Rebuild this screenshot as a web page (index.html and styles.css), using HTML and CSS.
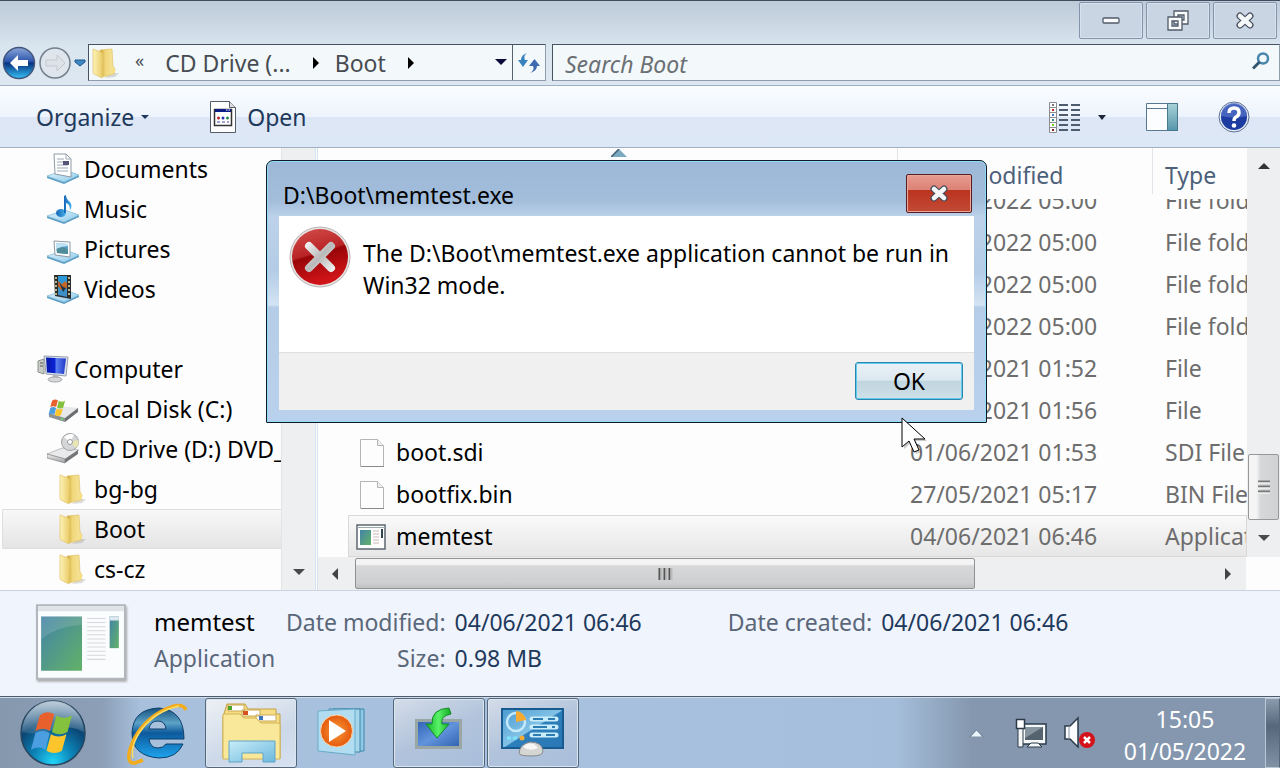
FILE: index.html
```html
<!DOCTYPE html>
<html lang="en">
<head>
<meta charset="utf-8">
<title>Boot</title>
<link rel="stylesheet" href="styles.css">
</head>
<body>
<svg class="defs" width="0" height="0" aria-hidden="true">
  <defs>
    <linearGradient id="gFold" x1="0" x2="1"><stop offset="0" stop-color="#fdf3b8"/><stop offset="1" stop-color="#e9c963"/></linearGradient>
    <linearGradient id="gFoldB" x1="0" x2="1"><stop offset="0" stop-color="#c99f2e"/><stop offset=".35" stop-color="#f0d678"/><stop offset="1" stop-color="#f7e6a0"/></linearGradient>
    <linearGradient id="gBase" x1="0" x2="1" y1="0" y2="1"><stop offset="0" stop-color="#e6f5fc"/><stop offset="1" stop-color="#8cc8ea"/></linearGradient>
    <linearGradient id="gNote" x1="0" x2="1"><stop offset="0" stop-color="#1466b8"/><stop offset="1" stop-color="#4ab2e8"/></linearGradient>
    <linearGradient id="gScreen" x1="0" x2="1"><stop offset="0" stop-color="#0718a8"/><stop offset=".45" stop-color="#0a22d8"/><stop offset=".5" stop-color="#5b82f0"/><stop offset="1" stop-color="#2038c8"/></linearGradient>
    <linearGradient id="gDisk" x1="0" x2="0" y1="0" y2="1"><stop offset="0" stop-color="#f4f4f4"/><stop offset="1" stop-color="#9a9c9e"/></linearGradient>
    <linearGradient id="gApp" x1="0" x2="1" y1="0" y2="1"><stop offset="0" stop-color="#4383a8"/><stop offset="1" stop-color="#62b267"/></linearGradient>
    <linearGradient id="gBack" x1="0" x2="0" y1="0" y2="1"><stop offset="0" stop-color="#8aa6d8"/><stop offset=".45" stop-color="#2c55ac"/><stop offset=".5" stop-color="#08307e"/><stop offset="1" stop-color="#35c3f6"/></linearGradient>
    <linearGradient id="gRed" x1="0" x2=".3" y1="0" y2="1"><stop offset="0" stop-color="#d4504c"/><stop offset=".5" stop-color="#b92426"/><stop offset=".54" stop-color="#980508"/><stop offset="1" stop-color="#cf1418"/></linearGradient>
    <linearGradient id="gX" gradientUnits="userSpaceOnUse" x1="17" x2="45" y1="17" y2="45"><stop offset="0" stop-color="#f4f4f4"/><stop offset=".5" stop-color="#b9b9b9"/><stop offset="1" stop-color="#f4f4f4"/></linearGradient>
    <linearGradient id="gPane" x1="0" x2="0" y1="0" y2="1"><stop offset="0" stop-color="#a9d2d8"/><stop offset="1" stop-color="#5596ab"/></linearGradient>
    <radialGradient id="gOrb" cx=".5" cy=".95" r=".9"><stop offset="0" stop-color="#22d3f6"/><stop offset=".35" stop-color="#0c84b8"/><stop offset=".7" stop-color="#0a4674"/><stop offset="1" stop-color="#3e6d94"/></radialGradient>
    <linearGradient id="gGloss" x1="0" x2="0" y1="0" y2="1"><stop offset="0" stop-color="#fff" stop-opacity=".65"/><stop offset="1" stop-color="#fff" stop-opacity=".1"/></linearGradient>
    <linearGradient id="gIe" x1="0" x2="0" y1="0" y2="1"><stop offset="0" stop-color="#15527e"/><stop offset=".3" stop-color="#5ea3c8"/><stop offset=".5" stop-color="#0d5a9c"/><stop offset="1" stop-color="#1ea4ee"/></linearGradient>
    <radialGradient id="gWmp"><stop offset="0" stop-color="#fb9a38"/><stop offset="1" stop-color="#e4590e"/></radialGradient>
    <linearGradient id="gGlass" x1="0" x2="1" y1="0" y2="1"><stop offset="0" stop-color="#c9edf8"/><stop offset="1" stop-color="#6cb8de"/></linearGradient>
    <linearGradient id="gMon" x1="0" x2="1" y1="0" y2="1"><stop offset="0" stop-color="#2c62b4"/><stop offset=".5" stop-color="#6294dc"/><stop offset="1" stop-color="#2d5fae"/></linearGradient>
    <linearGradient id="gCp" x1="0" x2="1" y1="0" y2="1"><stop offset="0" stop-color="#4b9bd2"/><stop offset=".5" stop-color="#83c2e6"/><stop offset=".52" stop-color="#2c7fbc"/><stop offset="1" stop-color="#2a76b4"/></linearGradient>
    <linearGradient id="gGreen" x1="0" x2="1"><stop offset="0" stop-color="#12b428"/><stop offset=".5" stop-color="#58f268"/><stop offset="1" stop-color="#12a824"/></linearGradient>
    <symbol id="folder" viewBox="0 0 28 32">
      <path d="M19 26l8 0-4 4-10 1z" fill="#777" opacity=".25"/>
      <path d="M8 3l12-1 1 17 2 3-1 5-12 3z" fill="url(#gFoldB)" stroke="#dfc368" stroke-width=".7"/>
      <path d="M1 2l8 3q2 1 2 4l-1 22-8-4q-1 0-1-2z" fill="url(#gFold)" stroke="#dfc368" stroke-width=".7"/>
      <path d="M20 21q4 0 3 4l-3 2z" fill="#f6df80"/>
    </symbol>
    <symbol id="file" viewBox="0 0 24 28">
      <path d="M.5.5h17l6 6v21H.5z" fill="#fdfdfd" stroke="#b5b5b5"/><path d="M17.500.5v6h6" fill="#eee" stroke="#b5b5b5"/>
      <path d="M1 27.500h23" stroke="#8a8a8a"/>
    </symbol>
    <symbol id="base" viewBox="0 0 32 32">
      <path d="M0 23l18-6 14 5v2l-15 7L0 25z" fill="#5c9dc4"/><path d="M0 23l18-6 14 5-15 7z" fill="url(#gBase)" stroke="#8cc4e2" stroke-width=".7"/>
    </symbol>
    <symbol id="flag" viewBox="0 0 36 38">
      <path d="M7 4q6-5 13-1l-4 15q-6-4-13 0z" fill="#e8602c"/><path d="M22 4q7 4 14 0l-4 15q-7 4-14 0z" fill="#84c13c"/>
      <path d="M3 20q6-4 13 0l-4 15q-6-4-13 0z" fill="#4b9fe0"/><path d="M17 21q7 4 14 0l-4 15q-7 4-14 0z" fill="#fcc52c"/>
    </symbol>
    <symbol id="cross" viewBox="0 0 20 18">
      <path d="M5 4l10 9M15 4L5 13" stroke="#414a5a" stroke-width="7" stroke-linecap="round"/><path d="M5 4l10 9M15 4L5 13" stroke="#f4f6f8" stroke-width="4.600" stroke-linecap="round"/>
    </symbol>
    <symbol id="app" viewBox="0 0 88 74">
      <path d="M1 1h86v72H1z" fill="#fbfcfd" stroke="#b2b7bd" stroke-width="2"/><path d="M2 2h84v5H2z" fill="#dfe3e8"/>
      <path d="M5 12h40v53H5z" fill="url(#gApp)"/><path d="M5 34Q20 22 45 20V12H5z" fill="#fff" opacity=".13"/>
      <path d="M50 14h18M50 18h18M50 22h18M50 26h18M50 30h18M50 34h18M50 38h18M50 42h18M50 46h18M50 50h18M50 54h18" stroke="#d5d8dc"/>
      <path d="M72 12h9v31h-9z" fill="url(#gApp)"/><path d="M72 12h9v4h-9z" fill="#dde7f0"/>
    </symbol>
  </defs>
</svg>

<main class="explorer">
  <header class="titlebar">
    <button class="caption" aria-label="Minimize"><svg width="18" height="8"><rect x="1" y="1" width="16" height="5" rx="1" fill="#f8fafb" stroke="#525b69" stroke-width="1.300"/></svg></button>
    <button class="caption" aria-label="Restore"><svg width="22" height="22" fill="#f8fafb" stroke="#525b69" stroke-width="1.300" fill-rule="evenodd"><path d="M7 1h14v13H7zM11 5v5h6V5z"/><path d="M1 7h14v13H1zM5 11v5h6v-5z"/></svg></button>
    <button class="caption" aria-label="Close"><svg width="20" height="18"><use href="#cross"/></svg></button>
  </header>

  <nav class="navbar">
    <div class="travel">
      <button aria-label="Back"><svg width="34" height="34"><circle cx="17" cy="17" r="15.500" fill="url(#gBack)" stroke="#44557c" stroke-width="1.500"/><path d="M8 17l8-8v5h10v6H16v5z" fill="#fff"/></svg></button>
      <button aria-label="Forward"><svg width="34" height="34"><circle cx="17" cy="17" r="15" fill="#dfe5ec" stroke="#747f8d" stroke-width="1.500"/><path d="M27 17l-8-8v5H8v6h11v5z" fill="#dce2e8" stroke="#c2c9d1"/></svg></button>
      <button aria-label="Recent pages"><svg width="12" height="8"><path d="M1 1h10v2L6 7 1 3z" fill="#3c87c4" stroke="#1f558c"/></svg></button>
    </div>
    <div class="address">
      <svg class="address-icon" width="28" height="32"><use href="#folder"/></svg>
      <span class="overflow-mark">«</span>
      <a href="#drive">CD Drive (...</a><svg width="8" height="12"><path d="M1 0l6 6-6 6z"/></svg>
      <a href="#boot">Boot</a><svg width="8" height="12"><path d="M1 0l6 6-6 6z"/></svg>
      <button class="drop" aria-label="Previous locations"><svg width="12" height="7"><path d="M0 0h12L6 6z" fill="#0b0b3a"/></svg></button>
      <button class="refresh" aria-label="Refresh"><svg width="22" height="20"><path d="M9 0Q5 3 7 7h3l-5 7-5-7h3Q3 2 9 0z" fill="#3883bd"/><path d="M12 20q5-3 3-7h-4l5.500-7 5.500 7h-3q0 5-7 7z" fill="#3f6cb0"/></svg></button>
    </div>
    <label class="search">
      <input type="search" placeholder="Search Boot" aria-label="Search Boot">
      <svg width="18" height="18" fill="none"><circle cx="11" cy="6.500" r="5" stroke="#4786ad" stroke-width="2.500"/><path d="M7.500 10L1 16.500" stroke="#33566f" stroke-width="3"/></svg>
    </label>
  </nav>

  <div class="toolbar">
    <button class="organize">Organize <svg width="8" height="5"><path d="M0 0h8L4 4z" fill="#1e395b"/></svg></button>
    <button class="open"><svg width="26" height="32"><path d="M.5.500h19l6 6v25H.5z" fill="#fff" stroke="#555d68"/><path d="M19.500.5v6h6" fill="#ddd" stroke="#555d68"/><path d="M4.500 8.500h17v16h-17z" fill="#fff" stroke="#333" stroke-width="1.500"/><path d="M5 8h16v3H5z" fill="#0c1c86"/><path d="M16 9h1.500M18.500 9h1.500" stroke="#fff"/><circle cx="8.500" cy="17" r="1.500" fill="#b52424"/><circle cx="13" cy="17" r="1.500" fill="#2434b5"/><circle cx="17.500" cy="17" r="1.500" fill="#248a4a"/><path d="M7 21h3M12 21h3M17 21h2" stroke="#44a"/></svg>Open</button>
    <button class="views" aria-label="Change your view"><svg width="32" height="31" stroke="#4e5d6e" stroke-width="2"><path d="M10 3h9M10 8h9M10 13h9M10 18h9M10 23h9M10 28h9M22 3h9M22 8h9M22 13h9M22 18h9M22 23h9M22 28h9"/><g fill="#fff" stroke="#8a8d90" stroke-width="1"><path d="M.5.500h7v30h-7zM.5 5.500h7M.5 10.500h7M.5 15.500h7M.5 20.500h7M.5 25.500h7"/></g><g stroke="none"><path d="M3 2h2v2H3z" fill="#777"/><path d="M3 7h2v2H3z" fill="#b22"/><path d="M3 12h2v2H3z" fill="#47c"/><path d="M3 17h2v2H3z" fill="#2a8a8a"/><path d="M3 22h2v2H3z" fill="#7c2"/><path d="M3 27h2v2H3z" fill="#822"/></g></svg><svg width="8" height="5"><path d="M0 0h8L4 5z" fill="#1b2738"/></svg></button>
    <button aria-label="Show the preview pane"><svg width="32" height="28"><path d="M.5.5h31v27H.5z" fill="#fbfdff" stroke="#5a7893"/><path d="M1 5.500h20" stroke="#5a7893"/><path d="M21.500.5h10v27h-10z" fill="url(#gPane)" stroke="#46788e"/></svg></button>
    <button aria-label="Help"><svg width="32" height="32"><circle cx="16" cy="16" r="15" fill="#e4ecf6" stroke="#5d7191"/><circle cx="16" cy="16" r="13" fill="#1d3c9f"/><path d="M3 15a13 13 0 0 1 26 0Q16 18 3 15z" fill="#5572c8" opacity=".75"/><path d="M11 12q0-5 5-5t5 4.500q0 3-3 4.500-2 1-2 4" fill="none" stroke="#fff" stroke-width="3.500"/><circle cx="16" cy="24.500" r="2.300" fill="#fff"/></svg></button>
  </div>

  <div class="panes">
    <aside class="tree">
      <ul>
        <li class="lvl2"><svg width="32" height="32"><use href="#base"/><path d="M7 1h12l5 5v18L8 21z" fill="#fff" stroke="#8e99a6"/><path d="M19 1v5h5M10 6h7M10 9h7M10 12h11M10 15h11M10 18h11" fill="none" stroke="#9da8b5"/><path d="M16 8h6v4h-6z" fill="#557"/></svg><a href="#documents">Documents</a></li>
        <li class="lvl2"><svg width="32" height="32"><use href="#base"/><ellipse cx="14" cy="20" rx="5" ry="4" fill="url(#gNote)"/><path d="M17 20V3l2-1q0 4 4 7 3 4 0 8 0-6-4-7v10z" fill="url(#gNote)"/></svg><a href="#music">Music</a></li>
        <li class="lvl2"><svg width="32" height="32"><use href="#base"/><path d="M7 8l16 1v15L8 22z" fill="#fff" stroke="#8e99a6"/><path d="M9 10l12 1v10L10 20z" fill="#5a9cc8"/><path d="M9.500 16q6-4 11.500 1v4L10 20z" fill="#4f8c9a"/><path d="M9 10l12 1v2q-6 0-12 3z" fill="#bfe2f4"/></svg><a href="#pictures">Pictures</a></li>
        <li class="lvl2"><svg width="32" height="32"><use href="#base"/><path d="M7 2l17 0v24L8 23z" fill="#2b2b2b"/><path d="M11 3h9v10l-9-1z" fill="#2a98d8"/><path d="M11 14l9 1v9l-9-2z" fill="#3d8fc8"/><path d="M11 8l4 3 3-3 2 2v5l-6 2-3-4z" fill="#c5662a"/><path d="M12 9l4 5 3 1-3 4z" fill="#1c3440"/><path d="M9 4v18M22 4v20" stroke="#e8e2a8" stroke-width="1.500" stroke-dasharray="2 2"/></svg><a href="#videos">Videos</a></li>
        <li class="spacer"></li>
        <li class="lvl1"><svg width="32" height="32"><path d="M1 8l6-2v15l-6-2z" fill="#c9cdc8" stroke="#8d938c"/><path d="M3 10h3M3 13h3" stroke="#555"/><path d="M7 3l24 1-2 19-20-2z" fill="#dbe1ea" stroke="#98a2b0"/><path d="M9 4.500l20 1-2 15.500-17-1.500z" fill="url(#gScreen)"/><path d="M16 22h5l1 4h-7z" fill="#b5b9be"/><ellipse cx="18" cy="26.500" rx="7" ry="2.500" fill="#d6d8da" stroke="#a5a8ab"/></svg><a href="#computer">Computer</a></li>
        <li class="lvl2"><svg width="32" height="32"><path d="M2 20l10-7 20 2-14 10z" fill="#e6e8e9"/><path d="M2 20l16 5v4L2 24z" fill="#8f9294"/><path d="M18 25l13-10v4l-13 10z" fill="#6c6f71"/><circle cx="15" cy="26" r="1" fill="#5e5"/><svg x="1" y="6" width="18" height="17"><use href="#flag"/></svg></svg><a href="#c">Local Disk (C:)</a></li>
        <li class="lvl2"><svg width="32" height="32"><path d="M0 21l15-6 17 2-14 9z" fill="#e9eaeb" stroke="#999" stroke-width=".6"/><path d="M0 21l18 5v4L0 25z" fill="url(#gDisk)" stroke="#777" stroke-width=".6"/><path d="M18 26l13-9v4l-13 9z" fill="#747678"/><circle cx="23" cy="9" r="8.500" fill="#d4d6d8" stroke="#a0a2a5"/><path d="M23 9l-6-5q6-5 10-2z" fill="#fff"/><path d="M23 9l6 6q4-4 2-8z" fill="#e9e6b2"/><circle cx="23" cy="9" r="2.500" fill="#fff" stroke="#999"/></svg><a href="#d">CD Drive (D:) DVD_</a></li>
        <li class="lvl3"><svg width="28" height="32"><use href="#folder"/></svg><a href="#bg">bg-bg</a></li>
        <li class="lvl3 current"><svg width="28" height="32"><use href="#folder"/></svg><a href="#bootdir">Boot</a></li>
        <li class="lvl3"><svg width="28" height="32"><use href="#folder"/></svg><a href="#cs">cs-cz</a></li>
      </ul>
      <div class="tree-scroll"><svg width="12" height="7"><path d="M0 0h12L6 6z" fill="#4a4a4a"/></svg></div>
    </aside>

    <section class="files">
      <div class="list">
        <div class="columns">
          <span class="col-name"><svg width="16" height="8"><path d="M0 8l8-8 8 8z" fill="#7ba9c0"/><path d="M0 8l8-8" stroke="#3c5e77" stroke-width="1.500"/></svg></span>
          <span>Date modified</span><span>Type</span>
        </div>
        <div class="rows">
          <table>
            <colgroup><col><col class="w-date"><col class="w-type"></colgroup>
            <tbody>
              <tr><td></td><td>01/05/2022 05:00</td><td>File folder</td></tr>
              <tr><td></td><td>01/05/2022 05:00</td><td>File folder</td></tr>
              <tr><td></td><td>01/05/2022 05:00</td><td>File folder</td></tr>
              <tr><td></td><td>01/05/2022 05:00</td><td>File folder</td></tr>
              <tr><td></td><td>01/06/2021 01:52</td><td>File</td></tr>
              <tr><td></td><td>01/06/2021 01:56</td><td>File</td></tr>
              <tr><td><svg width="24" height="28"><use href="#file"/></svg>boot.sdi</td><td>01/06/2021 01:53</td><td>SDI File</td></tr>
              <tr><td><svg width="24" height="28"><use href="#file"/></svg>bootfix.bin</td><td>27/05/2021 05:17</td><td>BIN File</td></tr>
              <tr class="selected"><td><svg class="wide" width="30" height="26"><path d="M1 1h28v24H1z" fill="#fdfdfd" stroke="#5c6670" stroke-width="1.500"/><path d="M1 3.500h28" stroke="#9aa"/><path d="M4 6h11v15H4z" fill="url(#gApp)"/><path d="M17 7h6M17 10h6M17 13h6M17 16h6M17 19h6" stroke="#ccb9bd"/><path d="M25 5h2v9h-2z" fill="#31434b"/></svg>memtest</td><td>04/06/2021 06:46</td><td>Application</td></tr>
            </tbody>
          </table>
        </div>
      </div>
      <div class="vscroll">
        <svg width="12" height="7"><path d="M0 6h12L6 0z" fill="#333"/></svg>
        <div class="vthumb"><svg width="12" height="14"><path d="M0 1.500h12M0 6.500h12M0 11.500h12" stroke="#777" stroke-width="2"/><path d="M0 3h12M0 8h12M0 13h12" stroke="#fff"/></svg></div>
        <svg width="12" height="7"><path d="M0 0h12L6 6z" fill="#4a4a4a"/></svg>
      </div>
      <div class="hscroll">
        <svg width="7" height="12"><path d="M6 0v12L0 6z" fill="#444"/></svg>
        <div class="hthumb"><svg width="15" height="12"><path d="M1.500 0v12M6.500 0v12M11.500 0v12" stroke="#555" stroke-width="2"/><path d="M3.500 0v12M8.500 0v12M13.500 0v12" stroke="#bbb" stroke-width="2"/></svg></div>
        <svg width="7" height="12"><path d="M0 0v12l6-6z" fill="#444"/></svg>
      </div>
    </section>
  </div>

  <footer class="details">
    <svg class="preview" width="90" height="76"><use href="#app"/></svg>
    <div class="what"><strong>memtest</strong><span>Application</span></div>
    <dl class="facts"><dt>Date modified:</dt><dd>04/06/2021 06:46</dd><dt>Size:</dt><dd>0.98 MB</dd></dl>
    <dl class="facts"><dt>Date created:</dt><dd>04/06/2021 06:46</dd></dl>
  </footer>
</main>

<footer class="taskbar">
  <button class="start" aria-label="Start"><svg width="66" height="66"><circle cx="33" cy="33" r="32" fill="url(#gOrb)" stroke="#27465f" stroke-width="1.500"/><path d="M2 32a31 31 0 0 1 62 0Q50 24 33 30T2 32z" fill="url(#gGloss)"/><svg x="10" y="11" width="44" height="42"><use href="#flag"/></svg></svg></button>
  <button class="task" aria-label="Internet Explorer"><svg width="66" height="64"><path d="M60 38H25q1 9 9 9 5 0 8-4h17q-6 14-24 14-27-2-27-25Q9 8 35 7q25 2 25 31zM25 28h17q-1-8-8-8-8 0-9 8z" fill="url(#gIe)" stroke="#0d3f6b"/><path d="M62 9Q58-1 36 11 14 24 6 48q-4 15 5 14l8-3" fill="none" stroke="#f2ac1c" stroke-width="3.500"/><path d="M55 5Q32 10 18 28 6 44 9 57" fill="none" stroke="#fbdc65" stroke-width="1.500"/></svg></button>
  <button class="task running active" aria-label="Windows Explorer"><svg width="62" height="60" stroke-width="1"><path d="M3 14l4-13h18l3 5h28v5h4v44H3z" fill="#f6dc83" stroke="#c39f45"/><path d="M8 2h16v6H8zM22 7h18v6H22zM36 12h20v6H36z" fill="#fff" stroke="#c9aa54"/><path d="M8 3h4v4H8z" fill="#4ea22f"/><path d="M23 8h5v4h-5z" fill="#d5521f"/><path d="M39 13h4v4h-4z" fill="#3b73bd"/><path d="M3 11h17l4 4h12l5 5h19v36H3z" fill="#fae89a" stroke="#d2b254"/><path d="M9 38h46v21H43V50H22v9H9z" fill="url(#gGlass)" stroke="#5fa4c8"/></svg></button>
  <button class="task" aria-label="Windows Media Player"><svg width="56" height="50"><path d="M16 1h31v42H16z" fill="#8fc8e4" stroke="#3f86aa"/><path d="M12 1h31v43H12z" fill="#a7d6ec" stroke="#3f86aa"/><path d="M1 3l37-2v46L1 43z" fill="#b2ddf0" stroke="#67abc9"/><circle cx="19.500" cy="23" r="16" fill="url(#gWmp)" stroke="#ffd1a0"/><path d="M12 12l17 11-17 11z" fill="#fff"/></svg></button>
  <button class="task running" aria-label="Installer"><svg width="48" height="54"><path d="M1.500 14.500h44v27h-44z" fill="url(#gMon)" stroke="#9aa6a4" stroke-width="3"/><path d="M34 2Q16 3 17 18h-6l11 14 12-14h-7q-2-8 9-10z" fill="url(#gGreen)" stroke="#148a24"/></svg></button>
  <button class="task running" aria-label="Control Panel"><svg width="64" height="50"><path d="M1 1h61v39H1z" fill="url(#gCp)" stroke="#195b8f" stroke-width="2"/><circle cx="15" cy="14" r="9" fill="none" stroke="#c5e9f8" stroke-width="2.500"/><path d="M15 14V3a11 11 0 0 1 10 9z" fill="#f5ab32"/><path d="M31 11h24M31 19h24M31 27h24" stroke="#c9ecfa" stroke-width="5" stroke-linecap="round"/><path d="M32 11h10M47 11h7M32 19h14M51 19h3M32 27h8M45 27h9" stroke="#2b7cb2" stroke-width="2"/><path d="M6 30h10" stroke="#7ee4fb" stroke-width="3" stroke-dasharray="4 2"/><circle cx="21" cy="30" r="2.500" fill="#f5ab32"/><path d="M18 45q1-9 11-11 12 0 13 9 0 5-11 5-13 0-13-3z" fill="#d5d5d2" stroke="#85898c"/><path d="M22 39q4-5 11-3l4 4q-8 4-15-1z" fill="#fff" opacity=".8"/></svg></button>
  <div class="tray">
    <button aria-label="Show hidden icons"><svg width="13" height="8"><path d="M0 8l6.500-7L13 8z" fill="#eaf4fa" stroke="#526579" stroke-width=".7"/></svg></button>
    <svg width="34" height="34"><path d="M7 8h24v20H7z" fill="#f5f8f9" stroke="#2d3b49" stroke-width="1.500"/><path d="M10 11h18v13H10z" fill="#55636f"/><path d="M10 11h18L10 22z" fill="#8795a0"/><path d="M16 27h7l4 4H12z" fill="#f5f8f9" stroke="#2d3b49"/><path d="M3 12v19h5V12" fill="#f5f8f9" stroke="#2d3b49"/><path d="M1.500 3.500h8v9h-8z" fill="#fff" stroke="#2d3b49" stroke-width="1.500"/></svg>
    <svg width="34" height="34"><path d="M2 10h5l8-8v29l-8-8H2z" fill="#fbfcfd" stroke="#2d3b49" stroke-width="1.500"/><path d="M6 10v13" stroke="#8b98a5"/><circle cx="24" cy="24" r="8" fill="#d3121a"/><path d="M21 21l6 6M27 21l-6 6" stroke="#fff" stroke-width="2.500"/></svg>
    <time class="clock"><span>15:05</span><span>01/05/2022</span></time>
    <button class="peek" aria-label="Show desktop"></button>
  </div>
</footer>

<div class="dialog" role="alertdialog" aria-labelledby="dlg-title" aria-describedby="dlg-text">
  <header><h1 id="dlg-title">D:\Boot\memtest.exe</h1><button class="dlg-close" aria-label="Close"><svg width="20" height="18"><use href="#cross"/></svg></button></header>
  <div class="dlg-body">
    <svg width="62" height="62"><circle cx="31" cy="31" r="30" fill="#e5e1e1" stroke="#bdb5b5"/><circle cx="31" cy="31" r="28" fill="url(#gRed)"/><path d="M20 20l22 22M42 20L20 42" stroke="url(#gX)" stroke-width="8" stroke-linecap="round"/></svg>
    <p id="dlg-text">The D:\Boot\memtest.exe application cannot be run in Win32 mode.</p>
  </div>
  <div class="dlg-actions"><button class="ok">OK</button></div>
</div>

<svg class="cursor" width="28" height="40" aria-hidden="true"><path d="M1 1v29l7-6 5 11 5-2-5-11h11z" fill="#000" opacity=".2" transform="translate(2 2)"/><path d="M1 1v29l7-6 5 11 5-2-5-11h11z" fill="#fff" stroke="#000"/></svg>
</body>
</html>
```
FILE: styles.css
```css
* { box-sizing: border-box; }
body {
  margin: 0;
  height: 100vh;
  position: relative;
  display: flex;
  flex-direction: column;
  overflow: hidden;
  font: 23px/32px "Noto Sans", "Open Sans", sans-serif;
  color: #000;
  background: #fff;
}
button, input { font: inherit; color: inherit; }
button { border: 0; padding: 0; background: none; display: flex; align-items: center; justify-content: center; }
a { color: inherit; text-decoration: none; }
svg { flex: none; display: block; }
.defs { position: absolute; }

.explorer { flex: 1; display: flex; flex-direction: column; min-height: 0; background: linear-gradient(#bdcad8, #d9e5ef 46px, #dce7f1 86px); border-top: 1px solid #414c5d; }

.titlebar { display: flex; justify-content: flex-end; gap: 3px; height: 43px; flex: none; padding: 1px 3px 5px 0; }
.caption { width: 64px; height: 37px; border: 1px solid #8494aa; border-radius: 2px; background: #c9d5e2; box-shadow: inset 0 0 0 1px #d8e2ec; }

.navbar { display: grid; grid-template-columns: 82px 458fr 728fr; column-gap: 6px; height: 42px; flex: none; padding-bottom: 4px; align-items: stretch; border-bottom: 1px solid #9fb0c2; }
.travel { display: flex; align-items: center; gap: 2px; padding-left: 2px; }
.address, .search { background: #f3f8fb; border: 1px solid #8f9cab; border-top-color: #46525f; display: flex; align-items: center; }
.address { border-left-color: #46525f; color: #474c52; gap: 21px; white-space: nowrap; }
.address-icon { margin-left: 3px; margin-right: -6px; }
.overflow-mark { font-size: 18px; line-height: 20px; padding-bottom: 6px; }
.address a { padding-top: 1px; }
.address > a + svg { margin-right: -6px; }
.drop { margin-left: auto; margin-right: -16px; }
.refresh { width: 33px; align-self: stretch; border-left: 1px solid #56636f; }
.search { border-left-color: #46525f; padding: 0 9px 0 12px; }
.search input { flex: 1; min-width: 0; border: 0; padding: 2px 0 0; background: none; font-style: italic; outline: 0; }
.search input::placeholder { color: #6b7075; opacity: 1; }
.search svg { margin-bottom: 4px; }

.toolbar { display: flex; align-items: center; height: 62px; flex: none; padding: 1px 30px 0 36px; color: #1e395b; border-bottom: 1px solid #9fafc4; background: linear-gradient(#fbfdff, #edf4fd 50%, #dde6f5 50%, #dde8f6); }
.toolbar .organize { gap: 7px; }
.toolbar .open { gap: 11px; margin-left: 61px; }
.toolbar .views { gap: 17px; margin-left: auto; }
.toolbar .views ~ button { margin-left: 40px; }

.panes { flex: 1; display: flex; min-height: 0; background: #fdfdfd; }
.tree { display: flex; width: 318px; flex: none; border-right: 3px double #d5e3f0; }
.tree ul { list-style: none; margin: 0; padding: 1px 0 0 2px; flex: 1; min-width: 0; overflow: hidden; }
.tree li { display: flex; align-items: center; height: 40px; white-space: nowrap; }
.tree .lvl1 { padding-left: 35px; gap: 5px; }
.tree .lvl2 { padding-left: 45px; gap: 5px; }
.tree .lvl3 { padding-left: 57px; gap: 7px; }
.tree .current { border: 1px solid #dedede; border-right: 0; border-radius: 2px 0 0 2px; padding-left: 56px; background: linear-gradient(#f8f8f8, #e5e5e5); }
.tree-scroll { width: 34px; background: #eeeff0; border-left: 1px solid #e3e4e5; display: flex; align-items: flex-end; justify-content: center; padding-bottom: 14px; }

.files { flex: 1; min-width: 0; display: grid; grid-template: minmax(0, 1fr) 33px / minmax(0, 1fr) 33px; }
.list { display: flex; flex-direction: column; min-height: 0; min-width: 0; padding-left: 30px; }
.columns { display: grid; grid-template-columns: minmax(0, 1fr) 255px 95px; height: 51px; flex: none; color: #4c607a; }
.columns span { padding: 11px 0 0 12px; border-left: 1px solid #e2e6ea; height: 46px; }
.columns .col-name { padding: 1px 0 0 263px; border: 0; }
.rows { flex: 1; min-height: 0; overflow: hidden; display: flex; flex-direction: column; justify-content: flex-end; }
table { border-collapse: collapse; table-layout: fixed; width: 100%; flex: none; }
.w-date { width: 255px; }
.w-type { width: 95px; }
td { height: 42px; padding: 0 0 0 13px; color: #6d6d6d; white-space: nowrap; overflow: hidden; }
td:first-child { color: #000; padding-left: 12px; }
td svg { display: inline-block; vertical-align: middle; margin: -4px 12px 0 0; }
td svg.wide { margin-left: -4px; margin-right: 10px; }
.selected { background: linear-gradient(#fafafa, #e6e6e6); outline: 1px solid #d9d9d9; outline-offset: -1px; }
.vscroll { background: #eeeff0; display: flex; flex-direction: column; align-items: center; padding: 15px 0 15px; }
.vthumb { margin-top: auto; margin-bottom: 15px; width: 31px; height: 66px; display: flex; align-items: center; justify-content: center; border: 1px solid #989898; border-radius: 2px; background: linear-gradient(90deg, #f5f5f5 25%, #d7d8da 40%, #cfd1d3); }
.hscroll { margin-right: 1px; background: #eeeff0; display: flex; align-items: center; padding: 0 14px; }
.hthumb { flex: 0 1 620px; height: 31px; margin: 0 auto 0 16px; display: flex; align-items: center; justify-content: center; border: 1px solid #8f9193; border-radius: 2px; background: linear-gradient(#f4f4f4 18%, #d7d8da 24%, #cfd0d2 80%, #bfc1c3); }

.details { display: flex; height: 106px; flex: none; border-top: 1px solid #ccd3de; padding: 13px 36px; background: #f0f4fd; color: #5a6779; line-height: 36px; white-space: nowrap; }
.preview { margin-right: 28px; filter: drop-shadow(1px 2px 1px #aaa); }
.what { display: flex; flex-direction: column; width: 132px; }
.what strong { font-weight: 400; font-size: 24px; color: #000; }
.facts { display: grid; grid-template-columns: auto auto; grid-auto-rows: 36px; column-gap: 9px; margin: 0 86px 0 0; }
.facts dt { text-align: right; }
.facts dd { margin: 0; color: #1e395b; }

.taskbar { display: flex; height: 72px; flex: none; gap: 2px; border-top: 1px solid #4d5b6c; box-shadow: inset 0 1px #d0dcea; background: linear-gradient(90deg, #8698ae, #8c9fb7 8%, #a8c0dc 11%, #a7c1df 45%, #a5bedb 70%, #8497ae 76%); padding-top: 1px; }
.start { width: 109px; padding-right: 3px; }
.task { width: 92px; border-radius: 3px; }
.running { border: 1px solid #55677b; box-shadow: inset 0 0 0 1px #dbe5f0; background: linear-gradient(155deg, #d4dce8, #b2c4dc 50%, #a9bedb); }
.running.active { background: linear-gradient(155deg, #eef1f5, #ccd8e8 60%, #d6e2f0); }
.tray { margin-left: auto; display: flex; align-items: center; color: #fff; }
.tray > svg { margin-left: 14px; }
.tray > button + svg { margin-left: 32px; }
.clock { display: flex; flex-direction: column; align-items: center; width: 124px; margin: 0 18px 0 26px; padding-top: 4px; }
.tray .peek { width: 15px; align-self: stretch; border: 1px solid #bac8d6; border-right-color: #56677a; background: linear-gradient(#8b9bae, #56677c 40%, #8192a7); }

.dialog { position: absolute; left: 266px; top: 160px; width: 721px; padding: 0 12px 12px; border: 1px solid #111a26; border-radius: 7px 7px 1px 1px; box-shadow: inset 0 0 0 1px #8edcf8; background: linear-gradient(#9db8d8, #a3bddb 40px, #bdd2ea 56px, #b4cce6 110px, #d3e4f4 144px, #b6cde8 146px, #b9d1ec); }
.dialog header { display: flex; align-items: flex-start; height: 55px; padding: 13px 2px 0 4px; }
.dialog h1 { flex: 1; margin: 5px 0 0; font-size: 23px; font-weight: 400; }
.dlg-close { width: 66px; height: 39px; border: 1px solid #571d22; border-radius: 2px; box-shadow: inset 0 0 0 1px #eba898; background: linear-gradient(#e79b91, #dd8175 40%, #bb3420 41%, #c24a35); }
.dlg-body { display: flex; gap: 12px; height: 136px; padding: 10px 12px 0 10px; background: #fff; }
.dlg-body p { margin: 11px 0 0; }
.dlg-actions { display: flex; justify-content: flex-end; padding: 9px 11px 10px; background: #f0f0f0; border-top: 1px solid #dfdfdf; }
.ok { width: 108px; height: 38px; border: 1px solid #2e86ad; border-radius: 3px; box-shadow: inset 0 0 0 1px #5fcdf0; background: linear-gradient(#eaf1f7, #dbe8f0 48%, #bfd5e0 50%, #cfe0e7); }
.cursor { position: absolute; left: 901px; top: 417px; }
```
